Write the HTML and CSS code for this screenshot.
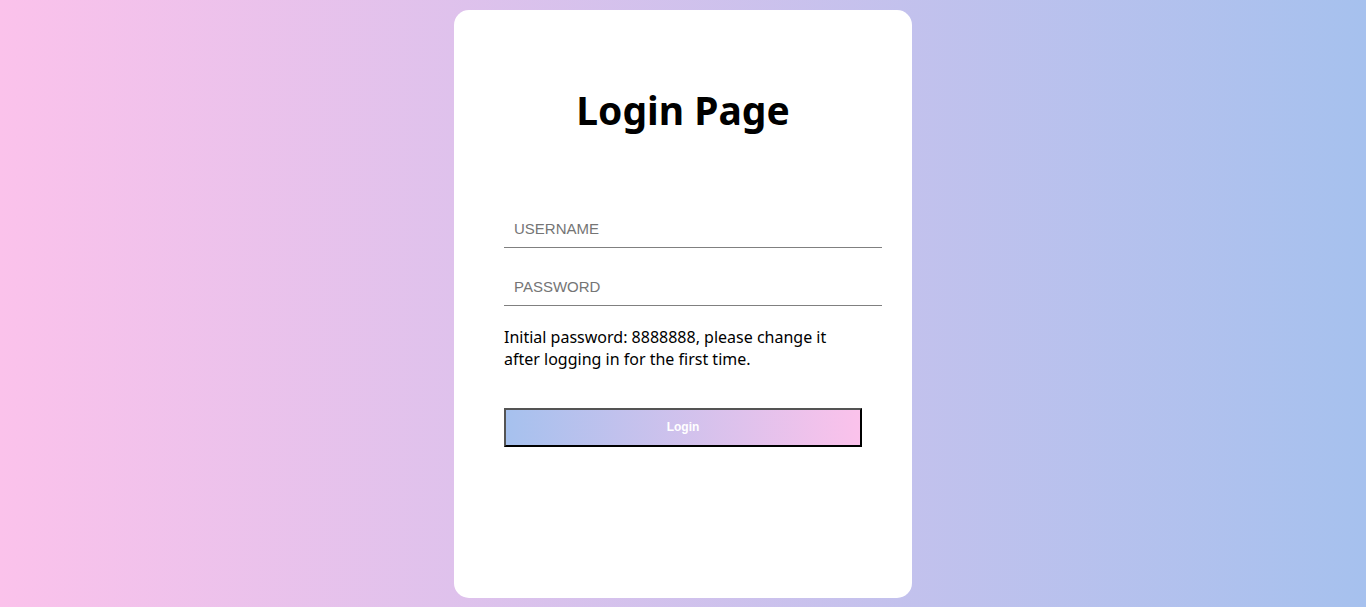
FILE: index.html
```html
<!DOCTYPE html>
<html lang="en">
<head>
<meta charset="utf-8">
<title>Login Page</title>
<link rel="stylesheet" href="styles.css">
</head>
<body>
<main class="container">
  <form class="login-card">
    <h1 class="header">Login Page</h1>
    <div class="fields">
      <input class="input-item" type="text" name="username" placeholder="USERNAME" aria-label="Username">
      <input class="input-item" type="password" name="password" placeholder="PASSWORD" aria-label="Password">
    </div>
    <p class="hint">Initial password: 8888888, please change it after logging in for the first time.</p>
    <button class="btn" type="submit">Login</button>
  </form>
</main>
</body>
</html>
```

FILE: styles.css
```css
* {
  margin: 0;
  padding: 0;
}

body {
  font-family: "Segoe UI", "Noto Sans", sans-serif;
  font-size: 16px;
  color: #000;
}

.container {
  display: flex;
  justify-content: center;
  align-items: center;
  min-height: 100vh;
  background-image: linear-gradient(to right, #fbc2eb, #a6c1ee);
}

.login-card {
  box-sizing: border-box;
  width: 100%;
  max-width: 458px;
  min-height: 588px;
  padding: 0 50px;
  border-radius: 15px;
  background-color: #fff;
}

.header {
  font-size: 39px;
  line-height: 200px;
  font-weight: 700;
  text-align: center;
}

.input-item {
  display: block;
  width: 100%;
  margin-bottom: 20px;
  padding: 10px;
  border: 0;
  border-bottom: 1px solid #808080;
  font-family: "Liberation Sans", Arial, sans-serif;
  font-size: 15px;
  line-height: 17px;
  outline: none;
}

.hint {
  line-height: 22px;
}

.btn {
  width: 100%;
  margin-top: 38px;
  padding: 10px;
  border: 2px outset #000;
  background-image: linear-gradient(to right, #a6c1ee, #fbc2eb);
  font-family: "Liberation Sans", Arial, sans-serif;
  font-size: 12px;
  font-weight: 700;
  line-height: 15px;
  color: #fff;
}
```
